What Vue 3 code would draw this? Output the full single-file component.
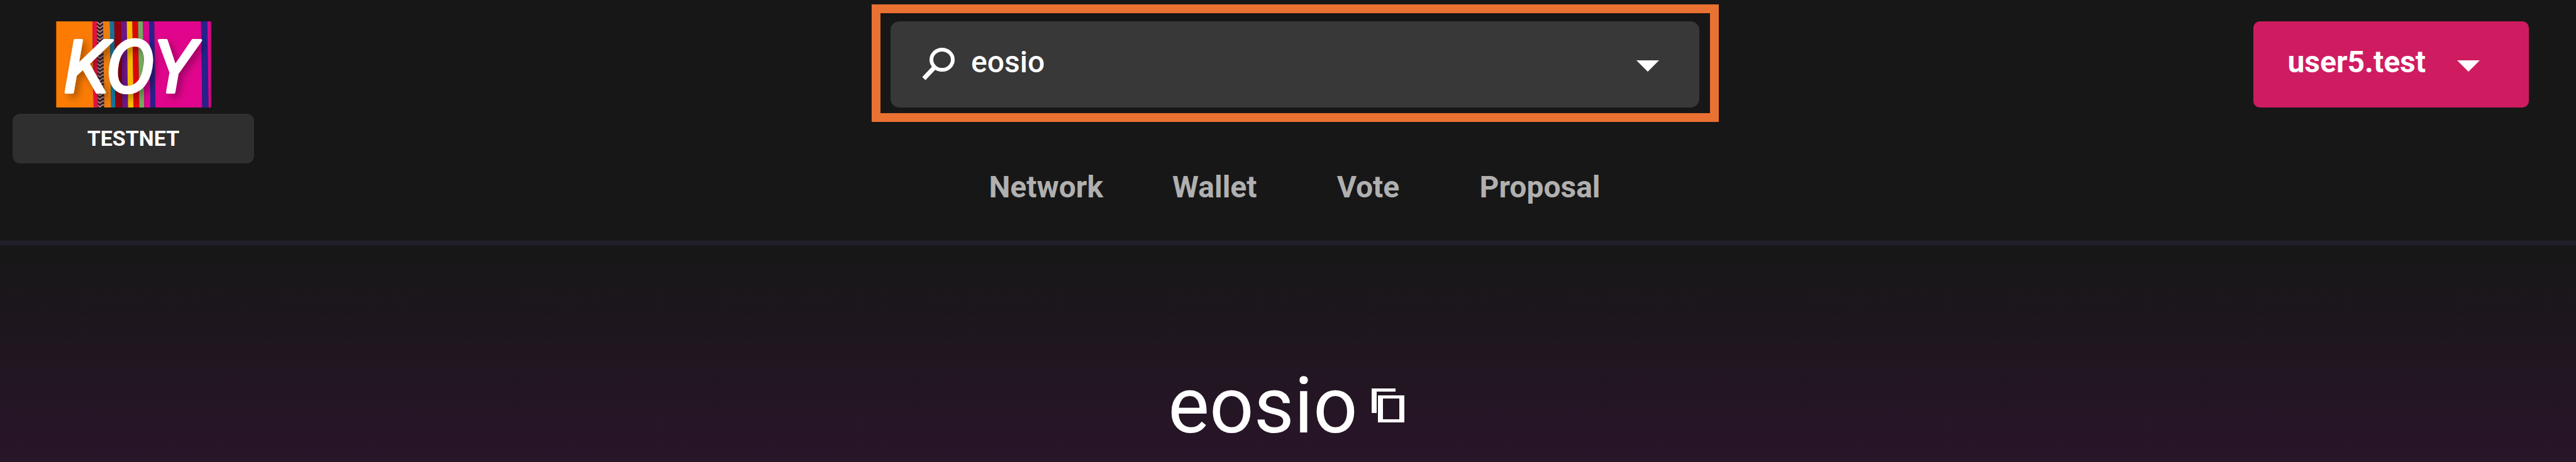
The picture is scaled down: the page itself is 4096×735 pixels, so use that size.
<script setup>
import { ref } from 'vue'

const query = ref('eosio')
const account = 'user5.test'
const links = ['Network', 'Wallet', 'Vote', 'Proposal']

const stripes = [
  { x: 0, w: 58, fill: '#fb7b05' },
  { x: 58, w: 7, fill: '#e5103f' },
  { x: 65, w: 10, fill: 'url(#weave)' },
  { x: 75, w: 11, fill: '#ee7d0c' },
  { x: 86, w: 7, fill: '#12749b' },
  { x: 93, w: 11, fill: '#92000e' },
  { x: 104, w: 9, fill: '#6d168a' },
  { x: 113, w: 9, fill: '#fbbc00' },
  { x: 122, w: 9, fill: '#e00505' },
  { x: 131, w: 8, fill: '#74ab60' },
  { x: 139, w: 10, fill: '#d9058c' },
  { x: 149, w: 8, fill: '#26218c' },
  { x: 157, w: 75, fill: '#e0058c' },
  { x: 232, w: 10, fill: '#26218c' },
  { x: 242, w: 6, fill: '#d9058c' }
]
const slant = (s) => {
  const right = s.x + s.w
  return `${s.x},0 ${right},0 ${Math.min(right + 2, 248)},138 ${s.x ? s.x + 2 : 0},138`
}
</script>

<template>
  <div class="page">
    <header class="header">
      <div class="brand">
        <svg class="logo" viewBox="0 0 248 138" role="img" aria-label="KOY">
          <defs>
            <pattern id="weave" width="10" height="12" patternUnits="userSpaceOnUse" x="65">
              <rect width="10" height="12" fill="#2c1820" />
              <path d="M0 1l5 4 5-4M0 7l5 4 5-4" fill="none" stroke="#b98c8c" stroke-width="2" />
            </pattern>
            <filter id="shade" x="-20%" y="-20%" width="150%" height="150%">
              <feDropShadow dx="6" dy="6" stdDeviation="6" flood-color="#000" flood-opacity="0.3" />
            </filter>
          </defs>
          <polygon v-for="s in stripes" :key="s.x" :points="slant(s)" :fill="s.fill" />
          <g class="lettering" filter="url(#shade)">
            <text x="12" y="114">K</text>
            <text x="79" y="114">O</text>
            <text x="155" y="114">Y</text>
          </g>
        </svg>
        <div class="network">TESTNET</div>
      </div>

      <div class="center">
        <div class="highlight">
          <div class="search">
            <svg class="glass" viewBox="0 0 54 60" aria-hidden="true">
              <ellipse cx="33" cy="26" rx="17" ry="16" fill="none" stroke="#fff" stroke-width="6" />
              <path d="M21 38L4 56" stroke="#fff" stroke-width="7" />
            </svg>
            <input v-model="query" class="field" type="text" aria-label="Search" />
            <button class="toggle" type="button" aria-label="Show options">
              <svg class="caret" viewBox="0 0 36 60" aria-hidden="true"><path d="M0 27h36L18 45z" fill="#fff" /></svg>
            </button>
          </div>
        </div>
        <nav class="nav">
          <a v-for="l in links" :key="l" class="link" href="#">{{ l }}</a>
        </nav>
      </div>

      <div class="session">
        <button class="account" type="button">
          <span>{{ account }}</span>
          <svg class="caret" viewBox="0 0 36 60" aria-hidden="true"><path d="M0 27h36L18 45z" fill="#fff" /></svg>
        </button>
      </div>
    </header>

    <main class="hero">
      <h1 class="title">eosio</h1>
      <button class="copy" type="button" aria-label="Copy account name">
        <svg class="copy-icon" viewBox="0 0 52 54" aria-hidden="true">
          <path d="M0 0h38v5H8v34H0z" fill="#fff" />
          <path d="M10 11h42v43H10zM18 16v33h26V16z" fill="#fff" fill-rule="evenodd" />
        </svg>
      </button>
    </main>
  </div>
</template>

<style>
body {
  margin: 0;
  background: #171717;
}
</style>

<style scoped>
.page {
  min-height: 100vh;
  display: flex;
  flex-direction: column;
  box-sizing: border-box;
  background: #171717;
  color: #fff;
  font-family: Roboto, "Liberation Sans", sans-serif;
}
button {
  margin: 0;
  padding: 0;
  border: 0;
  background: none;
  color: inherit;
  font: inherit;
  cursor: pointer;
}
svg {
  display: block;
  flex: none;
}
.header {
  display: grid;
  grid-template-columns: 1386fr 1347fr 1363fr;
  align-items: start;
  border-bottom: 7px solid #221e2b;
}
.brand {
  display: flex;
  flex-direction: column;
  align-items: center;
  gap: 10px;
  width: 384px;
  padding: 34px 0 0 20px;
}
.logo {
  width: 247px;
  height: 137px;
  overflow: visible;
}
.lettering {
  font-family: "Liberation Sans Narrow", Roboto, sans-serif;
  font-size: 118px;
  font-style: italic;
  font-weight: 400;
  fill: #fff;
  stroke: #fff;
  stroke-width: 4px;
  stroke-linejoin: round;
}
.network {
  width: 100%;
  padding: 19px 0 20px;
  border-radius: 12px;
  background: #2f2f2f;
  font-size: 34px;
  font-weight: 700;
  line-height: 40px;
  text-align: center;
}
.center {
  min-width: 0;
  padding-top: 7px;
}
.highlight {
  border: 14px solid #e97132;
  padding: 13px 17px 9px 16px;
}
.search {
  display: flex;
  align-items: center;
  padding: 35px 64px 42px 49px;
  border-radius: 14px;
  background: #383838;
}
.glass {
  width: 54px;
  height: 60px;
  margin-right: 25px;
}
.field {
  flex: 1;
  min-width: 0;
  height: 60px;
  padding: 0;
  border: 0;
  outline: 0;
  background: none;
  color: #fff;
  font-family: inherit;
  font-size: 48px;
  font-weight: 500;
  line-height: 60px;
}
.caret {
  width: 36px;
  height: 60px;
}
.nav {
  display: flex;
  justify-content: center;
  gap: 110px;
  padding: 74px 2px 55px 0;
}
.link {
  min-width: 134px;
  color: #b0b0b0;
  font-size: 48px;
  font-weight: 700;
  line-height: 60px;
  text-align: center;
  text-decoration: none;
}
.session {
  display: flex;
  justify-content: flex-end;
  padding: 34px 75px 0 0;
}
.account {
  display: flex;
  align-items: center;
  gap: 50px;
  padding: 35px 78px 42px 54px;
  border-radius: 10px;
  background: #cf1c61;
  font-size: 48px;
  font-weight: 700;
  line-height: 60px;
}
.hero {
  flex: 1;
  display: flex;
  justify-content: center;
  align-items: flex-start;
  gap: 22px;
  padding: 184px 6px 0 0;
  background: linear-gradient(#171717, #291529);
}
.title {
  margin: 0;
  font-size: 124px;
  font-weight: 400;
  line-height: 144px;
}
.copy {
  padding: 44px 0;
}
.copy-icon {
  width: 52px;
  height: 54px;
}
</style>
